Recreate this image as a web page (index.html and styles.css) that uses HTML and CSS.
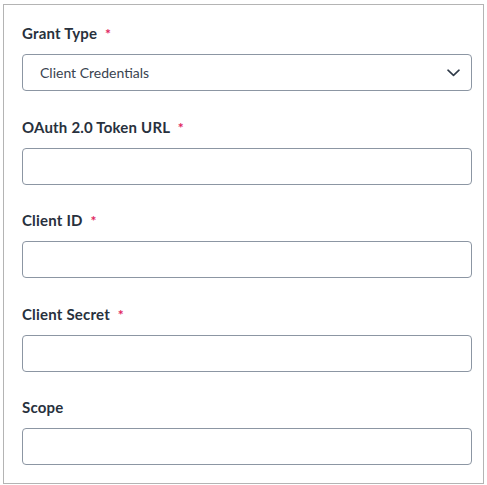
FILE: index.html
```html
<!DOCTYPE html>
<html lang="en">
<head>
<meta charset="utf-8">
<title>OAuth settings</title>
<link rel="stylesheet" href="styles.css">
</head>
<body>
<form class="panel">
  <div class="field">
    <label class="label">Grant Type <span class="req">*</span></label>
    <div class="select">
      <span class="select-value">Client Credentials</span>
      <svg class="chevron" width="13" height="8" viewBox="0 0 13 8" aria-hidden="true"><polyline points="1,1.2 6.5,6.3 12,1.2" fill="none" stroke="#2f3a48" stroke-width="1.6" stroke-linecap="round" stroke-linejoin="round"/></svg>
    </div>
  </div>
  <div class="field">
    <label class="label">OAuth 2.0 Token URL <span class="req">*</span></label>
    <input class="input" type="text">
  </div>
  <div class="field">
    <label class="label">Client ID <span class="req">*</span></label>
    <input class="input" type="text">
  </div>
  <div class="field">
    <label class="label">Client Secret <span class="req">*</span></label>
    <input class="input" type="text">
  </div>
  <div class="field">
    <label class="label">Scope</label>
    <input class="input" type="text">
  </div>
</form>
</body>
</html>
```
FILE: styles.css
```css
html, body {
  margin: 0;
  padding: 0;
  background: #ffffff;
}
body {
  font-family: "Lato", "Liberation Sans", sans-serif;
  color: #2b3441;
}
.panel {
  box-sizing: border-box;
  margin: 4px 0 0 3px;
  width: 481px;
  height: 480px;
  border: 1px solid #b4b4b4;
  padding: 18px 11px 0 18px;
  display: flex;
  flex-direction: column;
  gap: 25.5px;
}
.field {
  display: flex;
  flex-direction: column;
  gap: 11px;
}
.label {
  height: 20px;
  font-size: 15px;
  line-height: 20px;
  font-weight: 700;
  letter-spacing: 0.2px;
  color: #28313d;
  white-space: nowrap;
}
.req {
  color: #e0245e;
  margin-left: 4px;
  font-size: 14px;
  line-height: 0;
}
.select, .input {
  box-sizing: border-box;
  width: 450px;
  height: 37px;
  border: 1px solid #8c96a3;
  border-radius: 4px;
  background: #fff;
  margin: 0;
}
.select {
  display: flex;
  align-items: center;
  justify-content: space-between;
  padding: 0 11px 0 17px;
}
.select-value {
  font-size: 14px;
  color: #3a4350;
}
.chevron {
  display: block;
}
```
